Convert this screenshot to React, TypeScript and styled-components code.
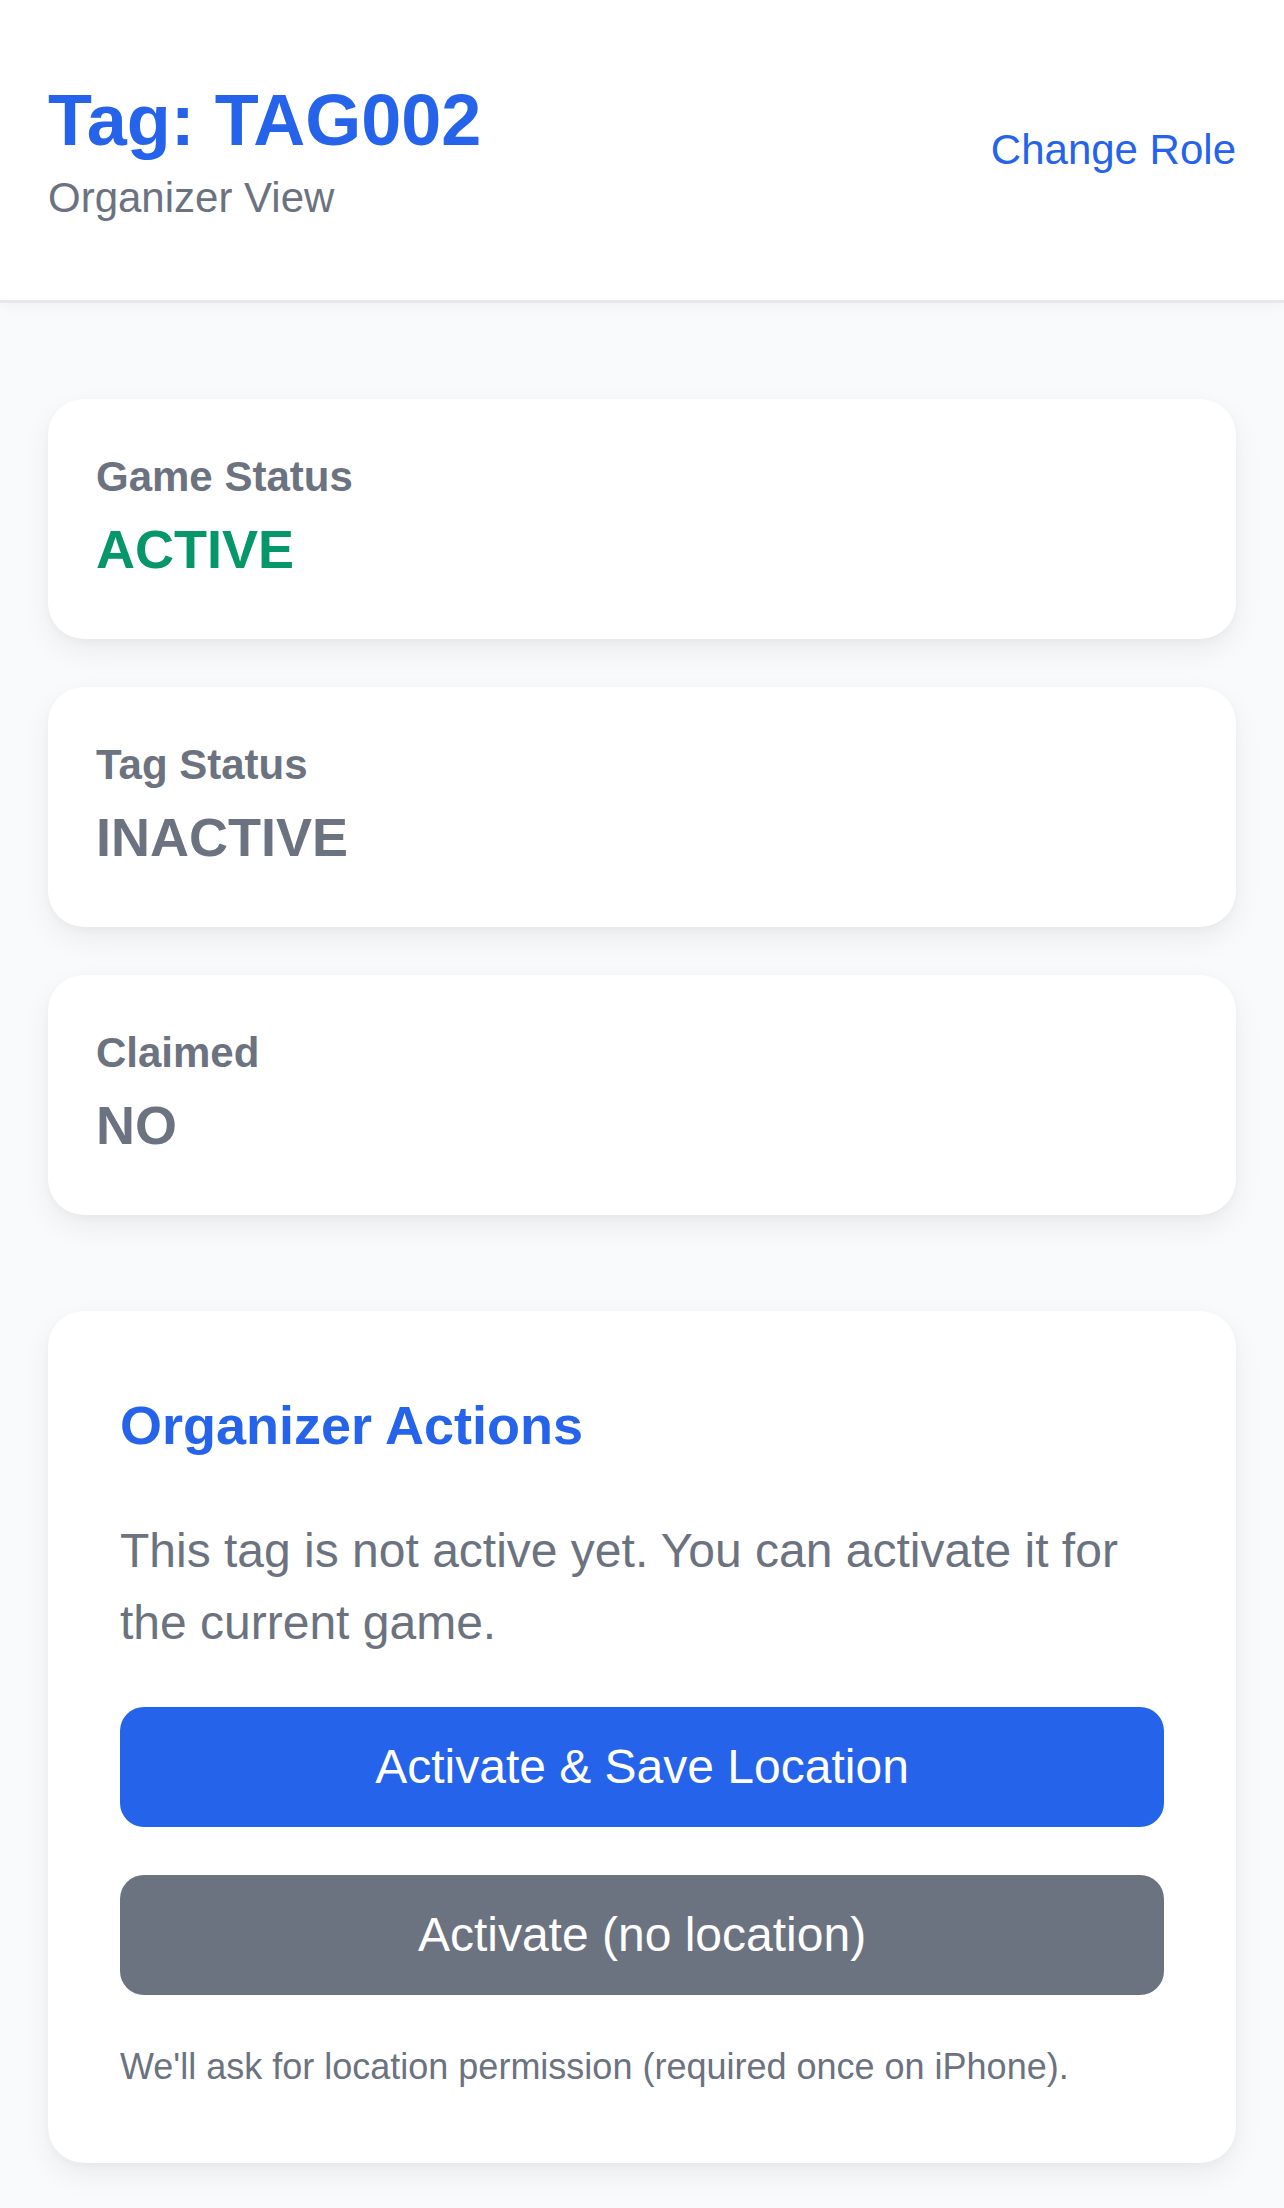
import React from 'react';
import styled, { createGlobalStyle } from 'styled-components';

const GlobalStyle = createGlobalStyle`
  * {
    box-sizing: border-box;
  }
  body {
    margin: 0;
    background-color: #f9fafb;
    font-family: 'Liberation Sans', Arial, Helvetica, sans-serif;
    color: #111827;
  }
`;

const Page = styled.div`
  min-height: 100vh;
  background-color: #f9fafb;
`;

const HeaderFrame = styled.header`
  display: flex;
  justify-content: space-between;
  align-items: center;
  padding: 72px 48px;
  background-color: #ffffff;
  box-shadow: 0 3px 0 #e5e7eb, 0 6px 12px rgba(0, 0, 0, 0.04);
  position: relative;
  z-index: 1;
`;

const TitleBlock = styled.div`
  display: flex;
  flex-direction: column;
`;

const Title = styled.h1`
  margin: 0;
  font-size: 72px;
  line-height: 96px;
  font-weight: 700;
  color: #2563eb;
`;

const Subtitle = styled.div`
  font-size: 42px;
  line-height: 60px;
  color: #6b7280;
`;

const RoleLink = styled.a`
  font-size: 42px;
  line-height: 60px;
  color: #2563eb;
  text-decoration: none;
  cursor: pointer;
`;

const Main = styled.main`
  padding: 99px 48px 48px;
`;

const StatusList = styled.div`
  display: flex;
  flex-direction: column;
  gap: 48px;
`;

const Card = styled.section`
  background-color: #ffffff;
  border-radius: 36px;
  padding: 48px;
  box-shadow: 0 12px 30px rgba(0, 0, 0, 0.06), 0 3px 8px rgba(0, 0, 0, 0.03);
`;

const StatLabel = styled.div`
  font-size: 42px;
  line-height: 60px;
  font-weight: 700;
  color: #6b7280;
`;

const StatValue = styled.div<{ $tone: string }>`
  font-size: 54px;
  line-height: 84px;
  font-weight: 700;
  color: ${({ $tone }) => $tone};
`;

const ActionCard = styled(Card)`
  margin-top: 96px;
  padding: 72px;
`;

const ActionTitle = styled.h2`
  margin: 0 0 48px;
  font-size: 54px;
  line-height: 84px;
  font-weight: 700;
  color: #2563eb;
`;

const ActionText = styled.p`
  margin: 0 0 48px;
  font-size: 48px;
  line-height: 72px;
  color: #6b7280;
`;

const ButtonStack = styled.div`
  display: flex;
  flex-direction: column;
  gap: 48px;
`;

const ActionButton = styled.button<{ $bg: string }>`
  width: 100%;
  height: 120px;
  border: none;
  border-radius: 24px;
  background-color: ${({ $bg }) => $bg};
  color: #ffffff;
  font-family: inherit;
  font-size: 48px;
  line-height: 72px;
  cursor: pointer;
`;

const Note = styled.p`
  margin: 48px 0 0;
  font-size: 36px;
  line-height: 48px;
  color: #6b7280;
`;

const STATS = [
  { label: 'Game Status', value: 'ACTIVE', tone: '#059669' },
  { label: 'Tag Status', value: 'INACTIVE', tone: '#6b7280' },
  { label: 'Claimed', value: 'NO', tone: '#6b7280' },
];

export default function App() {
  return (
    <Page>
      <GlobalStyle />
      <HeaderFrame>
        <TitleBlock>
          <Title>Tag: TAG002</Title>
          <Subtitle>Organizer View</Subtitle>
        </TitleBlock>
        <RoleLink>Change Role</RoleLink>
      </HeaderFrame>

      <Main>
        <StatusList>
          {STATS.map((s) => (
            <Card key={s.label}>
              <StatLabel>{s.label}</StatLabel>
              <StatValue $tone={s.tone}>{s.value}</StatValue>
            </Card>
          ))}
        </StatusList>

        <ActionCard>
          <ActionTitle>Organizer Actions</ActionTitle>
          <ActionText>This tag is not active yet. You can activate it for the current game.</ActionText>
          <ButtonStack>
            <ActionButton $bg="#2563eb">Activate &amp; Save Location</ActionButton>
            <ActionButton $bg="#6b7280">Activate (no location)</ActionButton>
          </ButtonStack>
          <Note>We'll ask for location permission (required once on iPhone).</Note>
        </ActionCard>
      </Main>
    </Page>
  );
}
